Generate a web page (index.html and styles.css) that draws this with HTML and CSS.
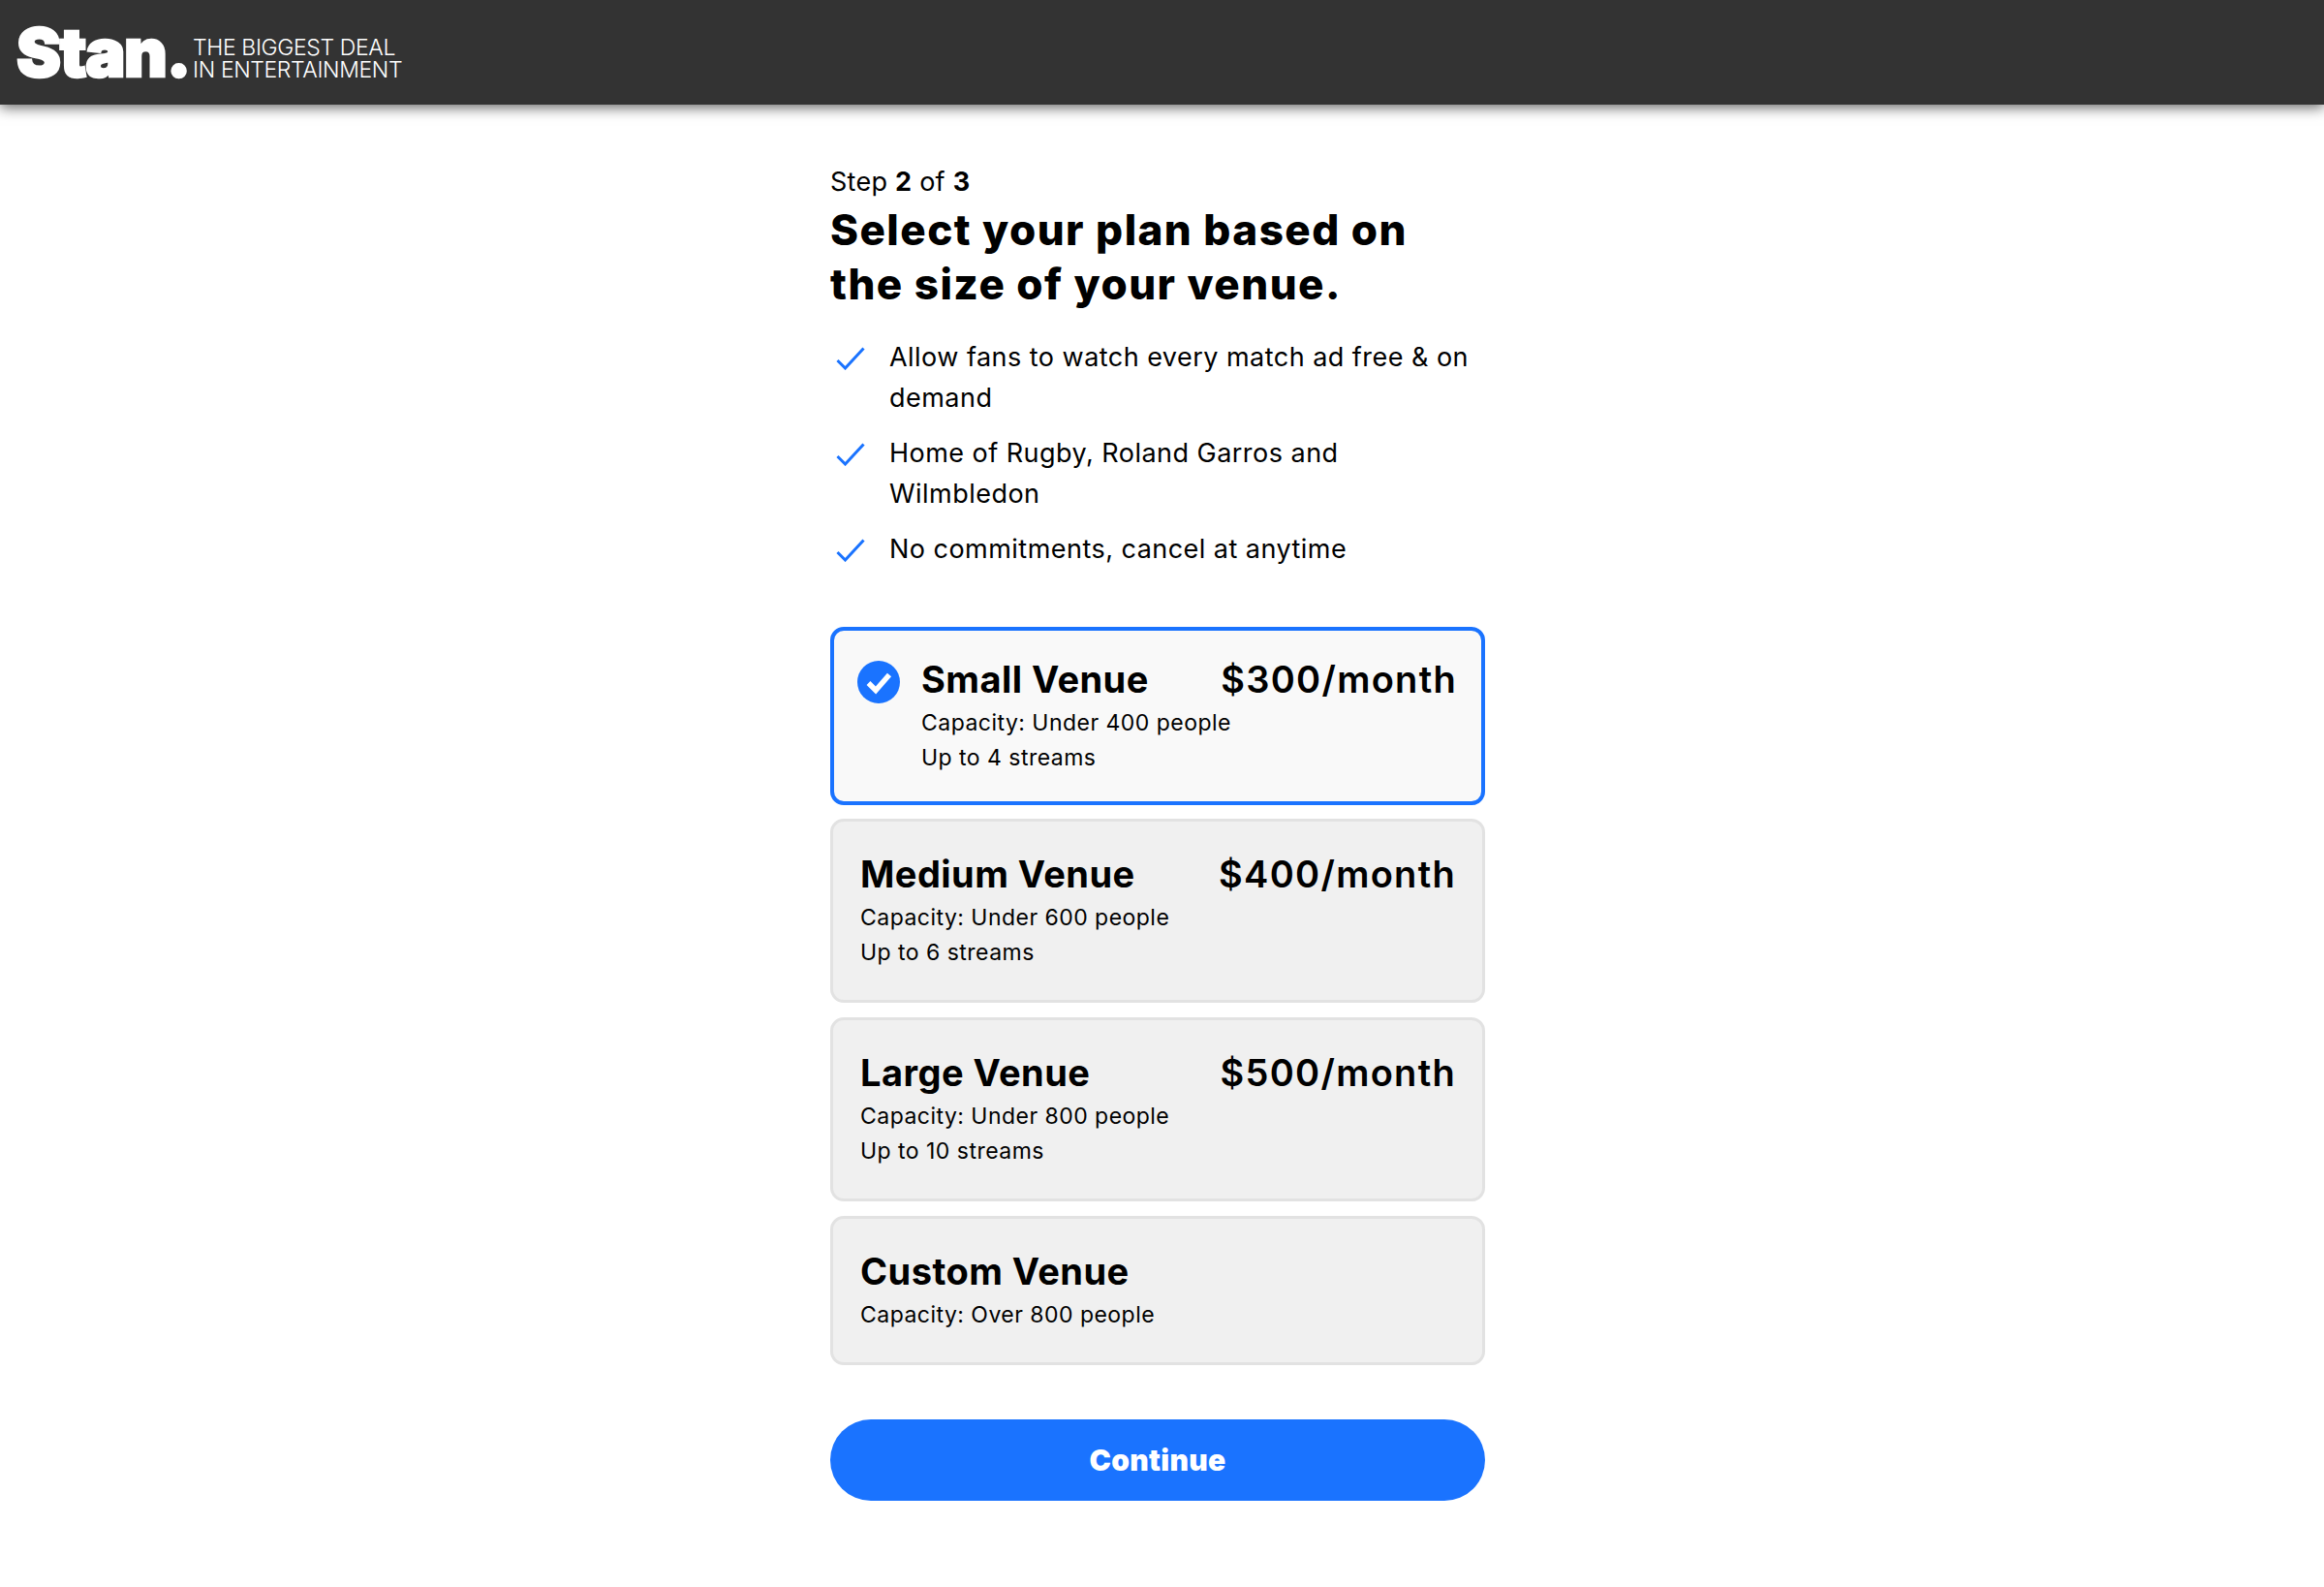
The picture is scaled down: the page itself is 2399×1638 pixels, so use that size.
FILE: index.html
```html
<!DOCTYPE html>
<html lang="en">
<head>
<meta charset="utf-8">
<title>Stan - Select your plan</title>
<link rel="stylesheet" href="styles.css">
</head>
<body>
<header class="topbar">
  <div class="logo">Stan.</div>
  <div class="tagline"><span>THE BIGGEST DEAL</span><span>IN ENTERTAINMENT</span></div>
</header>
<main class="page">
  <section class="column">
    <p class="step">Step <b>2</b> of <b>3</b></p>
    <h1 class="title">Select your plan based on<br>the size of your venue.</h1>
    <ul class="benefits">
      <li><svg class="tick" viewBox="0 0 30 24"><path d="M1.5 14 L9.5 22 L28.5 1.5"/></svg><span>Allow fans to watch every match ad free &amp; on demand</span></li>
      <li><svg class="tick" viewBox="0 0 30 24"><path d="M1.5 14 L9.5 22 L28.5 1.5"/></svg><span>Home of Rugby, Roland Garros and<br>Wilmbledon</span></li>
      <li><svg class="tick" viewBox="0 0 30 24"><path d="M1.5 14 L9.5 22 L28.5 1.5"/></svg><span>No commitments, cancel at anytime</span></li>
    </ul>
    <div class="plans">
      <div class="plan selected">
        <svg class="radio" viewBox="0 0 44 44"><circle cx="22" cy="22" r="22"/><path d="M11.5 23 L19 30.5 L33 14.5"/></svg>
        <div class="plan-body">
          <div class="plan-head"><span class="plan-name">Small Venue</span><span class="plan-price">$300/month</span></div>
          <p class="plan-line">Capacity: Under 400 people</p>
          <p class="plan-line">Up to 4 streams</p>
        </div>
      </div>
      <div class="plan">
        <div class="plan-body">
          <div class="plan-head"><span class="plan-name">Medium Venue</span><span class="plan-price">$400/month</span></div>
          <p class="plan-line">Capacity: Under 600 people</p>
          <p class="plan-line">Up to 6 streams</p>
        </div>
      </div>
      <div class="plan">
        <div class="plan-body">
          <div class="plan-head"><span class="plan-name">Large Venue</span><span class="plan-price">$500/month</span></div>
          <p class="plan-line">Capacity: Under 800 people</p>
          <p class="plan-line">Up to 10 streams</p>
        </div>
      </div>
      <div class="plan">
        <div class="plan-body">
          <div class="plan-head"><span class="plan-name">Custom Venue</span></div>
          <p class="plan-line">Capacity: Over 800 people</p>
        </div>
      </div>
    </div>
    <button class="continue" type="button">Continue</button>
  </section>
</main>
</body>
</html>
```
FILE: styles.css
```css
* { box-sizing: border-box; }
html, body { margin: 0; padding: 0; background: #fff; }
body { font-family: Inter, "Noto Sans", sans-serif; color: #000; height: 1638px; overflow: hidden; }

.topbar {
  height: 108px;
  background: #333;
  box-shadow: 0 3px 13px rgba(0,0,0,.6);
  display: flex;
  align-items: center;
  padding-left: 17px;
  gap: 3px;
  color: #fff;
}
.logo {
  font-family: Inter, sans-serif;
  font-weight: 900;
  font-size: 69px;
  line-height: 60px;
  letter-spacing: -1.3px;
  -webkit-text-stroke: 2.5px #fff;
  white-space: nowrap;
  margin-top: -1px;
}
.tagline {
  display: flex;
  flex-direction: column;
  font-weight: 300;
  font-size: 23px;
  line-height: 23px;
  letter-spacing: -.38px;
  margin-top: 13px;
}

.page { display: flex; justify-content: center; padding-right: 9px; }
.column { width: 676px; padding-top: 64px; display: flex; flex-direction: column; }

.step { margin: 0; font-size: 27px; line-height: 32px; font-weight: 400; letter-spacing: .25px; }
.step b { font-weight: 700; }
.title { margin: 5px 0 0; font-size: 44px; line-height: 56px; font-weight: 800; letter-spacing: 1.45px; }

.benefits { list-style: none; margin: 27px 0 0; padding: 0; }
.benefits li { display: flex; align-items: flex-start; font-size: 27px; line-height: 41.5px; letter-spacing: .47px; margin-bottom: 16px; }
.benefits li:last-child { margin-bottom: 0; }
.tick { width: 30px; height: 24px; margin: 10px 25px 0 6px; flex: none; }
.tick path { fill: none; stroke: #1a73ff; stroke-width: 3; }

.plans { margin-top: 59px; display: flex; flex-direction: column; gap: 14.8px; }
.plan {
  display: flex;
  background: #f0f0f0;
  border: 3px solid #e2e2e2;
  border-radius: 14px;
  padding: 34px 27px 31px 28px;
}
.plan.selected {
  background: #f9f9f9;
  border: 4px solid #1a73ff;
  padding: 30px 25px 27px 24px;
  gap: 22px;
}
.radio { width: 44px; height: 44px; flex: none; margin-top: 1px; }
.radio circle { fill: #1a73ff; }
.radio path { fill: none; stroke: #fff; stroke-width: 5.5; }
.plan-body { flex: 1; }
.plan-head { display: flex; justify-content: space-between; font-size: 38px; line-height: 40px; letter-spacing: .45px; }
.plan-name { font-weight: 700; }
.plan-price { font-weight: 600; letter-spacing: 1.3px; }
.plan-line { margin: 0; font-size: 23px; line-height: 36px; letter-spacing: .47px; }
.plan-head + .plan-line { margin-top: 7px; }

.continue {
  margin-top: 56.5px;
  height: 84px;
  border: 0;
  border-radius: 42px;
  background: #1a73ff;
  color: #fff;
  font-family: inherit;
  font-size: 30px;
  font-weight: 900;
  letter-spacing: .3px;
}
```
